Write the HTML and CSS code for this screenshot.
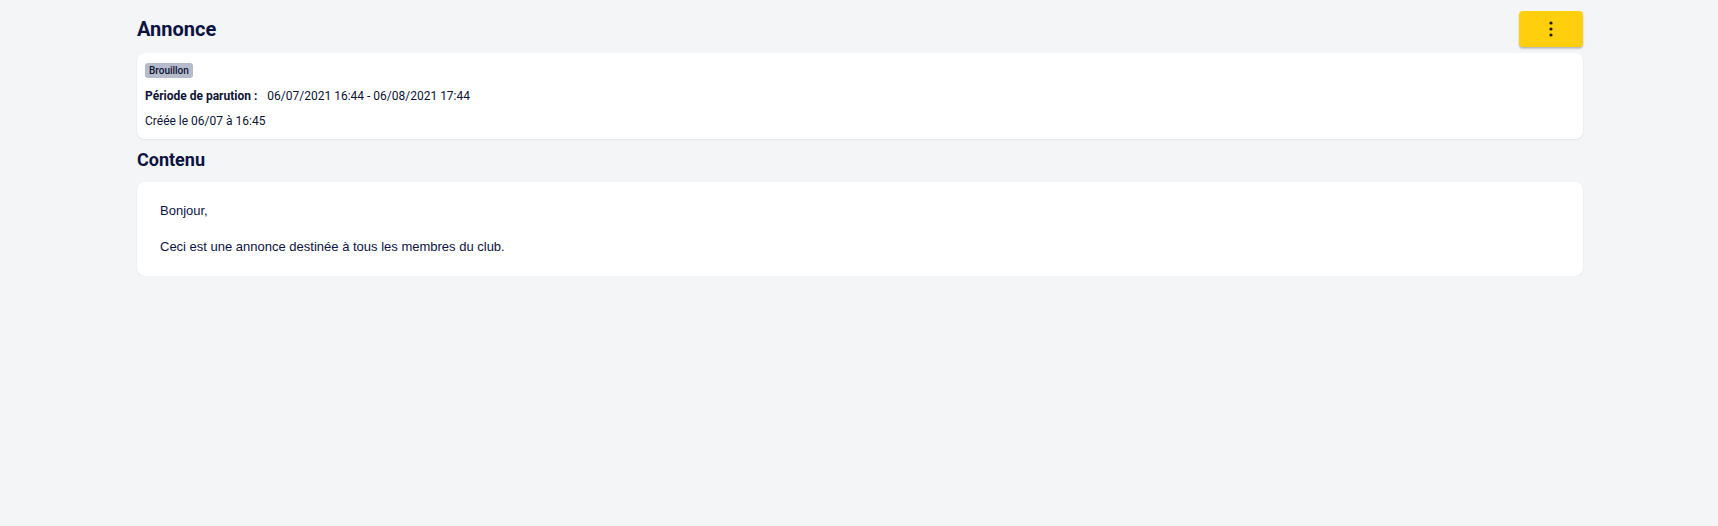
FILE: index.html
```html
<!DOCTYPE html>
<html lang="fr">
<head>
<meta charset="utf-8">
<title>Annonce</title>
<link rel="stylesheet" href="styles.css">
</head>
<body>
<div class="page">
  <div class="header">
    <h1 class="title">Annonce</h1>
    <button class="menu-btn" type="button" aria-label="Actions">
      <svg class="menu-icon" viewBox="0 0 24 24" width="24" height="24"><circle cx="12" cy="6" r="1.6"/><circle cx="12" cy="12" r="1.6"/><circle cx="12" cy="18" r="1.6"/></svg>
    </button>
  </div>
  <div class="card info-card">
    <span class="badge">Brouillon</span>
    <div class="info-line"><span class="info-label">Période de parution :</span><span>06/07/2021 16:44 - 06/08/2021 17:44</span></div>
    <div class="info-line created">Créée le 06/07 à 16:45</div>
  </div>
  <h2 class="section-title">Contenu</h2>
  <div class="card content-card">
    <p>Bonjour,</p>
    <p>Ceci est une annonce destinée à tous les membres du club.</p>
  </div>
</div>
</body>
</html>
```
FILE: styles.css
```css
html, body {
  margin: 0;
  padding: 0;
  background: #f4f5f7;
}
body {
  font-family: Roboto, "Noto Sans", sans-serif;
  color: #0b1342;
  padding: 0 135px 0 137px;
}
.page {
  padding-top: 11px;
}
.header {
  display: flex;
  justify-content: space-between;
  align-items: center;
  height: 36px;
}
.title {
  margin: 0;
  font-size: 20px;
  font-weight: 700;
  line-height: 24px;
  color: #0b1342;
}
.menu-btn {
  width: 64px;
  height: 36px;
  border: none;
  border-radius: 4px;
  background: #ffcf0d;
  box-shadow: 0 2px 2px rgba(0,0,0,0.18), 0 1px 1px rgba(0,0,0,0.08);
  display: flex;
  align-items: center;
  justify-content: center;
  padding: 0;
  cursor: pointer;
}
.menu-icon {
  fill: #1b1b1b;
  display: block;
}
.card {
  background: #ffffff;
  border-radius: 8px;
  box-shadow: 0 1px 2px rgba(20, 30, 60, 0.08);
}
.info-card {
  margin-top: 6px;
  padding: 10px 8px;
  font-size: 12px;
  line-height: 16px;
  color: #0d1335;
}
.badge {
  display: inline-block;
  height: 15px;
  line-height: 15px;
  padding: 0 4px;
  border-radius: 3px;
  background: #b6bbcb;
  font-size: 10px;
  font-weight: 500;
  color: #0d1335;
  vertical-align: top;
}
.info-line {
  margin-top: 9px;
}
.info-label {
  font-weight: 700;
  margin-right: 10px;
}
.section-title {
  margin: 9px 0 10px 0;
  font-size: 18px;
  font-weight: 700;
  line-height: 24px;
  color: #0b1342;
}
.content-card {
  padding: 20px 24px 20px 23px;
  font-family: "Liberation Sans", Arial, sans-serif;
  font-size: 13px;
  line-height: 17.5px;
  color: #0b1342;
}
.content-card p {
  margin: 0;
}
.content-card p + p {
  margin-top: 18.5px;
}
```
